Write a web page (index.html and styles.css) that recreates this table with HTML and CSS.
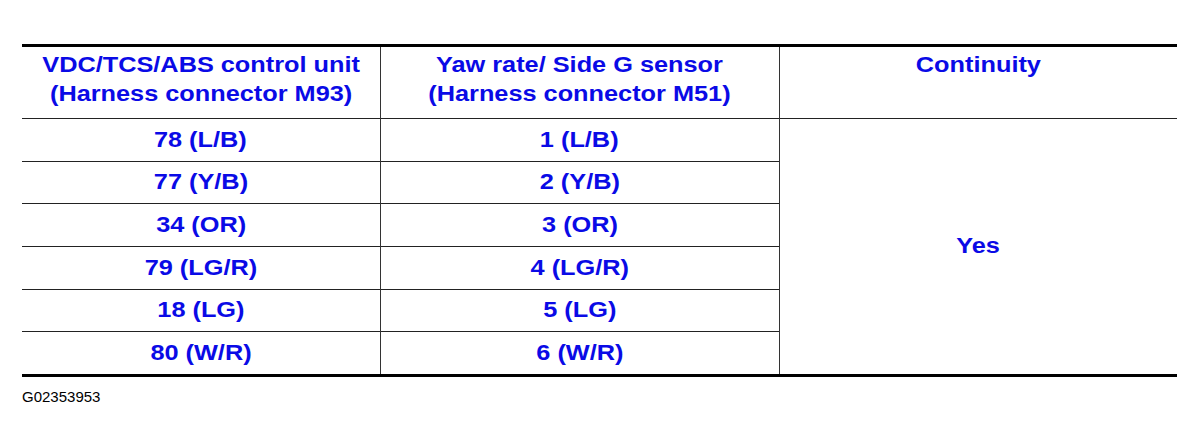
FILE: index.html
```html
<!DOCTYPE html>
<html>
<head>
<meta charset="utf-8">
<link rel="stylesheet" href="styles.css">
</head>
<body>
<div class="page">
  <table class="conn">
    <colgroup>
      <col class="c1"><col class="c2"><col class="c3">
    </colgroup>
    <thead>
      <tr>
        <th><span class="t">VDC/TCS/ABS control unit<br>(Harness connector M93)</span></th>
        <th><span class="t">Yaw rate/ Side G sensor<br>(Harness connector M51)</span></th>
        <th><span class="t">Continuity</span></th>
      </tr>
    </thead>
    <tbody>
      <tr><td><span class="t">78 (L/B)</span></td><td><span class="t">1 (L/B)</span></td><td class="yes" rowspan="6"><span class="t">Yes</span></td></tr>
      <tr><td><span class="t">77 (Y/B)</span></td><td><span class="t">2 (Y/B)</span></td></tr>
      <tr><td><span class="t">34 (OR)</span></td><td><span class="t">3 (OR)</span></td></tr>
      <tr><td><span class="t">79 (LG/R)</span></td><td><span class="t">4 (LG/R)</span></td></tr>
      <tr><td><span class="t">18 (LG)</span></td><td><span class="t">5 (LG)</span></td></tr>
      <tr><td><span class="t">80 (W/R)</span></td><td><span class="t">6 (W/R)</span></td></tr>
    </tbody>
  </table>
  <div class="code">G02353953</div>
</div>
</body>
</html>
```
FILE: styles.css
```css
html, body {
  margin: 0;
  padding: 0;
  background: #fff;
}
.page {
  padding: 44px 23px 0 22px;
  font-family: "Liberation Sans", Arial, sans-serif;
}
.conn {
  border-collapse: collapse;
  width: 1155px;
  table-layout: fixed;
  border-top: 3px solid #000;
  border-bottom: 3px solid #000;
}
.c1 { width: 358px; }
.c2 { width: 399px; }
.c3 { width: 398px; }
.conn th, .conn td {
  color: #0a0ae6;
  font-weight: bold;
  font-size: 22px;
  text-align: center;
  padding: 0;
  border-left: 1px solid #333;
  border-top: 1px solid #222;
}
.t {
  display: inline-block;
  transform: scaleX(1.15);
}
.conn th:first-child, .conn td:first-child {
  border-left: none;
}
.conn th {
  height: 73px;
  vertical-align: top;
  line-height: 29px;
  padding-top: 3px;
  box-sizing: border-box;
  border-top: none;
}
.conn td {
  height: 41.67px;
  line-height: 24px;
  vertical-align: middle;
}
.conn td.yes {
  vertical-align: middle;
}
.code {
  margin-top: 11px;
  font-size: 15px;
  color: #000;
}
```
